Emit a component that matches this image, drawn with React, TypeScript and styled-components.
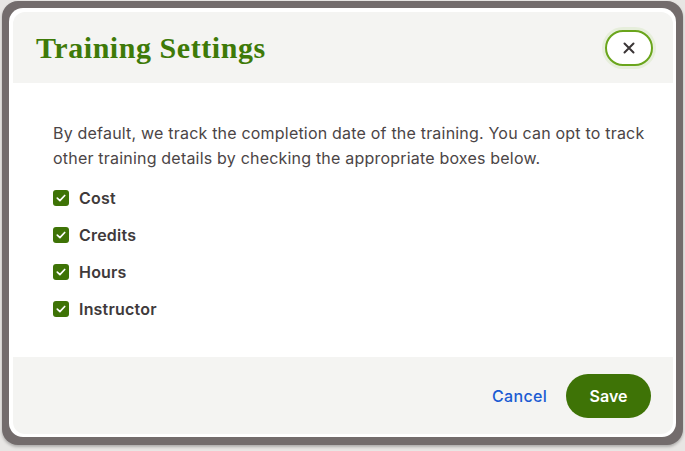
import React from "react";
import styled, { createGlobalStyle } from "styled-components";

const Global = createGlobalStyle`
  html, body { margin: 0; padding: 0; background: #e8e6e4; }
  body { font-family: Inter, "Noto Sans", sans-serif; }
  * { box-sizing: border-box; }
`;

const Page = styled.div`
  width: 685px;
  height: 451px;
  padding: 1px 2px 6px 2px;
  display: flex;
`;

const Backdrop = styled.div`
  flex: 1;
  background: #736c6c;
  border-radius: 16px;
  padding: 7px 7px 8px 7px;
  display: flex;
  box-shadow: 0 2px 3px rgba(0, 0, 0, 0.25);
`;

const Modal = styled.div`
  flex: 1;
  background: #ffffff;
  border-radius: 14px;
  padding: 4px 3px 3px 4px;
  display: flex;
  flex-direction: column;
`;

const Header = styled.header`
  height: 71px;
  background: #f4f4f2;
  border-radius: 12px 12px 0 0;
  display: flex;
  align-items: center;
  justify-content: space-between;
  padding: 0 20px 0 23px;
`;

const Title = styled.h1`
  margin: 0;
  font-family: "Liberation Serif", "DejaVu Serif", serif;
  font-weight: 700;
  font-size: 30px;
  color: #3e7a08;
  letter-spacing: 0.55px;
`;

const CloseButton = styled.button`
  width: 48px;
  height: 36px;
  border-radius: 18px;
  border: 2px solid #6aa51c;
  background: #ffffff;
  box-shadow: 0 0 0 3px #e6eedb;
  display: flex;
  align-items: center;
  justify-content: center;
  padding: 0;
  cursor: pointer;
`;

const Body = styled.section`
  flex: 1;
  padding: 38px 16px 0 40px;
`;

const Intro = styled.p`
  margin: 0 0 16px 0;
  font-size: 16px;
  letter-spacing: 0.2px;
  line-height: 25px;
  color: #4b4546;
`;

const List = styled.div`
  display: flex;
  flex-direction: column;
  gap: 15px;
`;

const Row = styled.label`
  display: flex;
  align-items: center;
  gap: 10px;
  height: 22px;
`;

const Box = styled.span`
  width: 16px;
  height: 16px;
  border-radius: 3px;
  background: #3e7306;
  display: flex;
  align-items: center;
  justify-content: center;
`;

const Label = styled.span`
  font-size: 16px;
  font-weight: 600;
  letter-spacing: 0.2px;
  color: #403a3b;
`;

const Footer = styled.footer`
  height: 77px;
  background: #f4f4f2;
  border-radius: 0 0 12px 12px;
  display: flex;
  align-items: center;
  justify-content: flex-end;
  gap: 19px;
  padding: 0 22px 0 0;
`;

const CancelLink = styled.button`
  background: none;
  border: none;
  padding: 0;
  font-family: Inter, sans-serif;
  font-size: 16px;
  font-weight: 500;
  letter-spacing: 0.3px;
  color: #1a5bd3;
  cursor: pointer;
`;

const SaveButton = styled.button`
  width: 85px;
  height: 44px;
  border-radius: 22px;
  border: none;
  background: #3e7306;
  color: #ffffff;
  font-family: Inter, sans-serif;
  font-size: 16px;
  font-weight: 600;
  cursor: pointer;
`;

const Check = () => (
  <svg width="12" height="12" viewBox="0 0 12 12" fill="none">
    <path d="M2.3 6.2 L4.9 8.6 L9.7 3.5" stroke="#fff" strokeWidth="1.7" strokeLinecap="round" strokeLinejoin="round" />
  </svg>
);

const XIcon = () => (
  <svg width="12" height="12" viewBox="0 0 12 12" fill="none">
    <path d="M1.5 1.5 L10.5 10.5 M10.5 1.5 L1.5 10.5" stroke="#3a3536" strokeWidth="2" strokeLinecap="round" />
  </svg>
);

const items = ["Cost", "Credits", "Hours", "Instructor"];

export default function App() {
  return (
    <>
      <Global />
      <Page>
        <Backdrop>
          <Modal>
            <Header>
              <Title>Training Settings</Title>
              <CloseButton aria-label="Close">
                <XIcon />
              </CloseButton>
            </Header>
            <Body>
              <Intro>
                By default, we track the completion date of the training. You can opt to track other training details
                by checking the appropriate boxes below.
              </Intro>
              <List>
                {items.map((it) => (
                  <Row key={it}>
                    <Box>
                      <Check />
                    </Box>
                    <Label>{it}</Label>
                  </Row>
                ))}
              </List>
            </Body>
            <Footer>
              <CancelLink>Cancel</CancelLink>
              <SaveButton>Save</SaveButton>
            </Footer>
          </Modal>
        </Backdrop>
      </Page>
    </>
  );
}
